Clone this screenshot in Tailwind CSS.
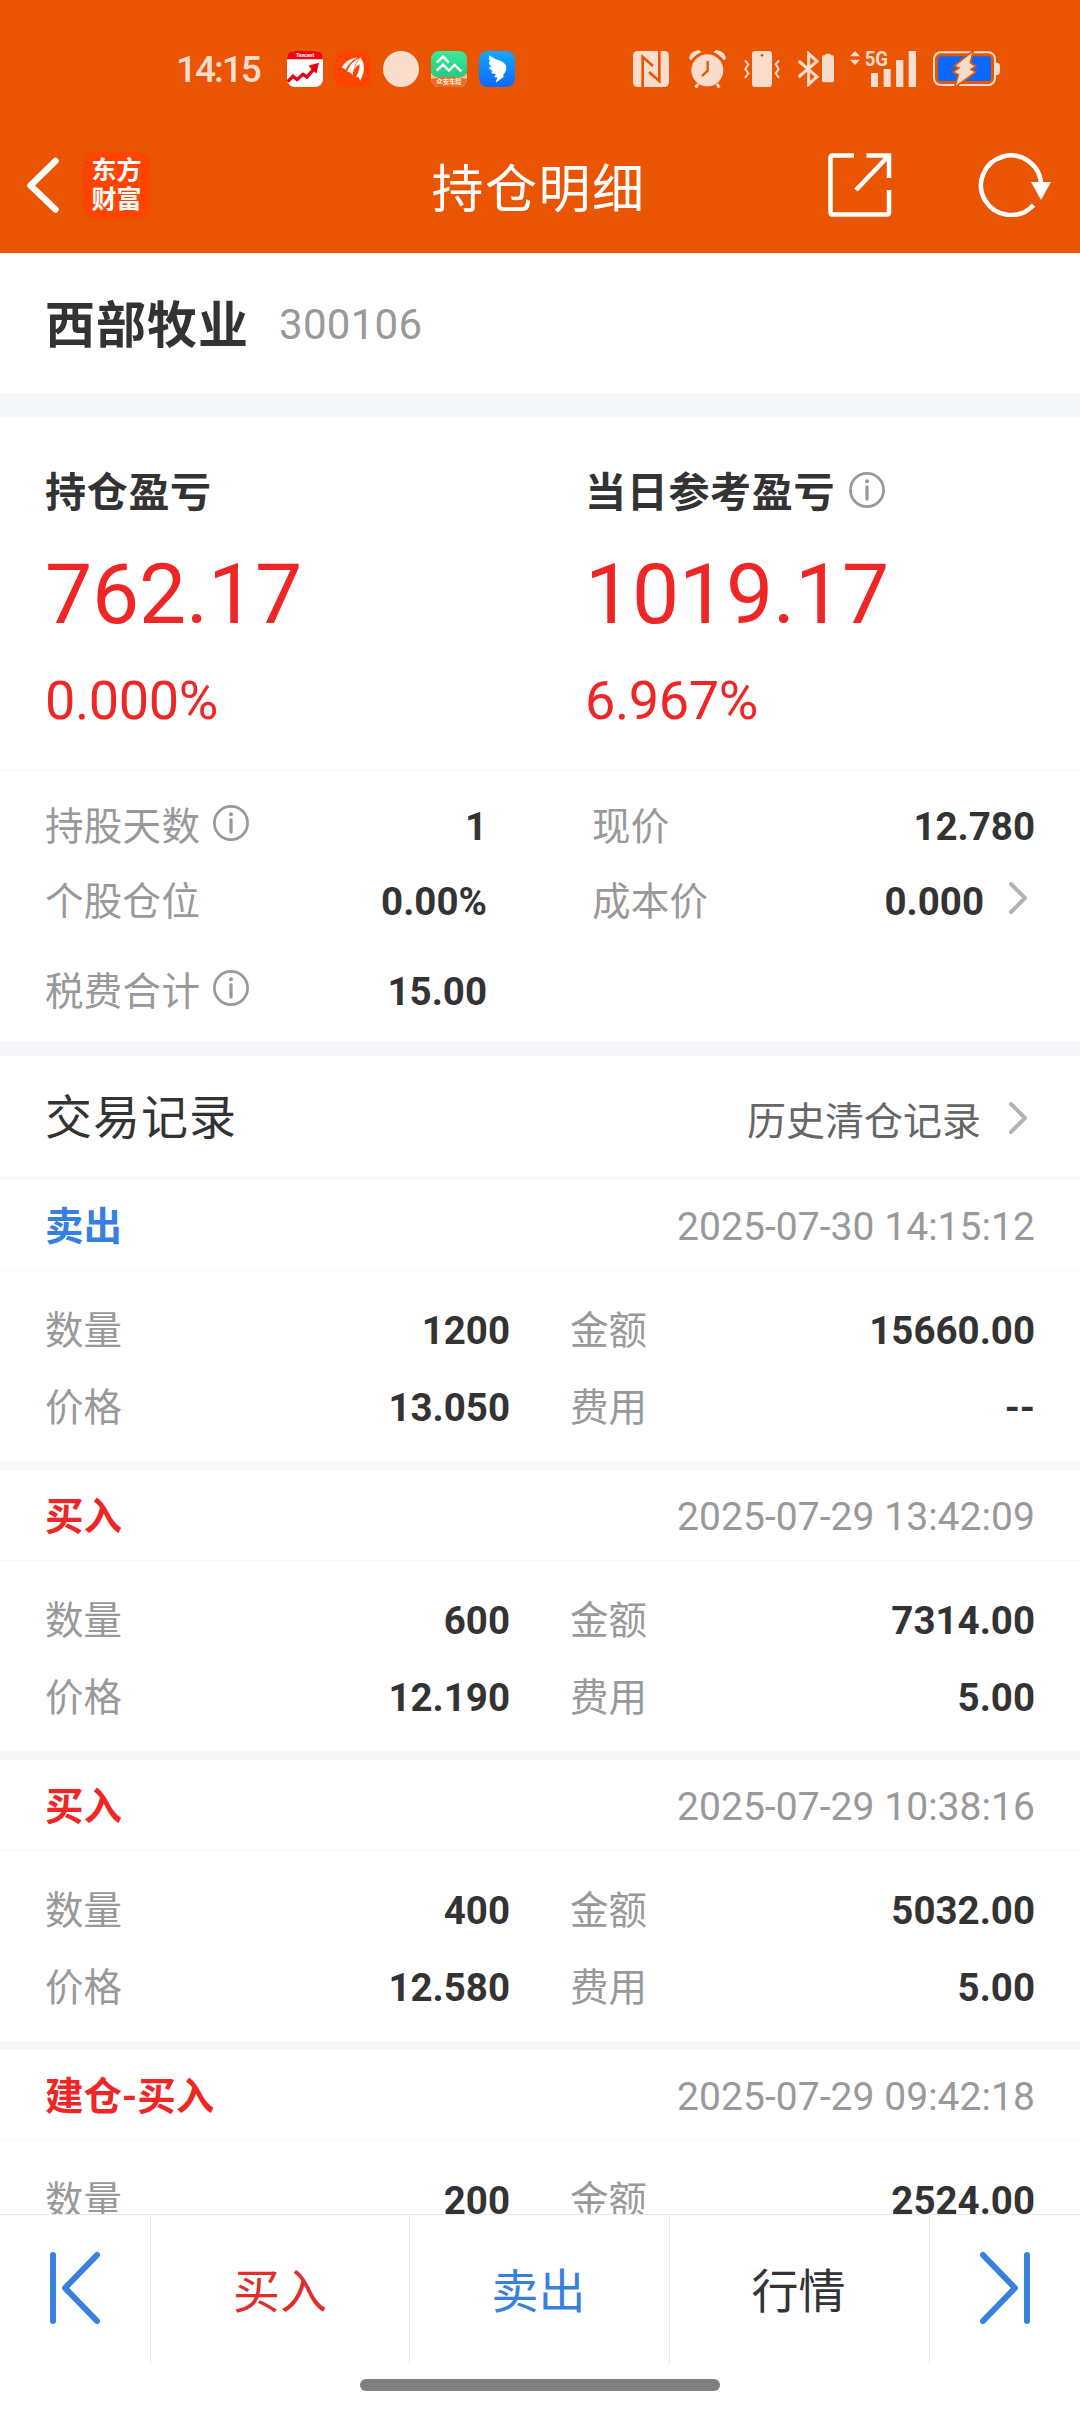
<!DOCTYPE html>
<html lang="zh-CN">
<head>
    <meta charset="UTF-8">
    <meta name="viewport" content="width=device-width, initial-scale=1.0">
    <title>持仓明细</title>
    <script src="https://cdn.jsdelivr.net/npm/@tailwindcss/browser@4"></script>
</head>
<body class="w-[1080px] h-[2412px] flex flex-col overflow-hidden bg-white text-[#333333] font-[Roboto,'Noto_Sans_CJK_SC',sans-serif]">
    <header class="h-[253px] shrink-0 bg-[#ea5504] text-white">
        <!-- Status bar -->
        <div class="h-[138px] pl-[176px] pr-20 flex items-center justify-between text-[#fbddce]">
            <div class="flex items-center gap-3">
                <span class="w-[99px] text-[37px] leading-none font-medium tracking-[-2px]">14:15</span>
                <svg class="size-9" viewBox="0 0 108 108">
                    <rect width="108" height="108" rx="24" fill="#fff"/>
                    <path d="M0 25V22Q0 0 24 0H84Q108 0 108 22V25Z" fill="#ec0a12"/>
                    <text x="54" y="18" text-anchor="middle" font-family="Roboto" font-weight="700" font-size="15" fill="#fff">Tencent</text>
                    <path d="M2 92L18 76L30 86L48 70L60 78L82 52" fill="none" stroke="#e60012" stroke-width="10"/>
                    <path d="M96 35L64 44L88 68Z" fill="#e60012"/>
                </svg>
                <svg class="size-9" viewBox="0 0 108 108">
                    <rect width="108" height="108" rx="24" fill="#ff4400"/>
                    <path d="M20 50Q34 24 68 19Q42 34 31 57Q28 50 20 50ZM36 62Q46 34 72 21Q56 44 53 73Q47 62 36 62ZM57 56Q64 34 76 19Q98 50 75 90Q74 76 63 77Q74 60 74 40Q64 44 57 56Z" fill="#fff"/>
                </svg>
                <div class="size-9 rounded-full bg-[#fbddce]"></div>
                <svg class="size-9" viewBox="0 0 108 108">
                    <defs>
                        <linearGradient id="green" x1="0" y1="0" x2="0" y2="1"><stop stop-color="#3deb98"/><stop offset="1" stop-color="#1fb97a"/></linearGradient>
                        <clipPath id="appClip"><rect width="108" height="108" rx="24"/></clipPath>
                    </defs>
                    <g clip-path="url(#appClip)">
                        <rect width="108" height="108" fill="url(#green)"/>
                        <path d="M0 66Q8 78 24 80H84Q100 78 108 66V108H0Z" fill="#f7c877"/>
                        <path d="M0 84Q54 72 108 84V108H0Z" fill="#f0692a"/>
                        <path d="M17 35L36 17L54 35M17 59L36 41L54 59L71 42L91 61" fill="none" stroke="#fff" stroke-width="7"/>
                        <text x="54" y="100" text-anchor="middle" font-family="Noto Sans CJK SC" font-weight="700" font-size="19" fill="#fff3d0">众安车险</text>
                    </g>
                </svg>
                <svg class="size-9" viewBox="0 0 108 108">
                    <defs><linearGradient id="blue" x1="0" y1="0" x2="0" y2="1"><stop stop-color="#12a8ff"/><stop offset="1" stop-color="#0a68ff"/></linearGradient></defs>
                    <rect width="108" height="108" rx="26" fill="url(#blue)"/>
                    <path d="M30 13Q44 24 66 30Q83 38 82 52Q81 62 71 76L77 76L50 95L55 79H45L51 69Q40 70 35 62L44 61Q31 57 30 48L39 49Q29 40 29 32L34 34Q28 24 30 13Z" fill="#fff"/>
                </svg>
            </div>
            <div class="flex items-center">
                <!-- NFC -->
                <svg class="size-9" viewBox="0 0 108 108">
                    <rect width="108" height="108" rx="14" fill="#fbddce"/>
                    <path d="M29 108V18L60 45M79 0V90L48 63" fill="none" stroke="#ea5504" stroke-width="8"/>
                </svg>
                <!-- Alarm -->
                <svg class="w-[37px] h-[38px] ml-5" viewBox="0 0 111 114">
                    <circle cx="55" cy="61" r="48" fill="#fbddce"/>
                    <path d="M0 26Q2 4 30 0L38 7Q18 14 7 31ZM111 26Q109 4 81 0L73 7Q93 14 104 31Z" fill="#fbddce"/>
                    <path d="M27 102L20 113M84 102L91 113" stroke="#fbddce" stroke-width="9"/>
                    <path d="M56 36V62L41 76" fill="none" stroke="#ea5504" stroke-width="7" stroke-linecap="round"/>
                </svg>
                <!-- Vibrate -->
                <svg class="size-9 ml-[18px]" viewBox="0 0 108 108">
                    <rect x="24" width="60" height="108" rx="10" fill="#fbddce"/>
                    <circle cx="54" cy="13" r="4" fill="#ea5504"/>
                    <path d="M3 28L13 40L4 54L13 67L3 81M105 28L95 40L104 54L95 67L105 81" fill="none" stroke="#fbddce" stroke-width="6"/>
                </svg>
                <!-- Bluetooth -->
                <svg class="size-9 ml-[18px]" viewBox="0 0 108 108">
                    <path d="M2 30L57 77L32 100V8L57 31L2 78" fill="none" stroke="#fbddce" stroke-width="9"/>
                    <path d="M72 18Q72 13 77 13H82V8H98V13H103Q108 13 108 18V89Q108 94 103 94H77Q72 94 72 89Z" fill="#fbddce"/>
                </svg>
                <!-- 5G signal -->
                <svg class="w-[66px] h-9 ml-4" viewBox="0 0 198 108">
                    <path d="M15 0L30 16H0ZM15 42L30 26H0Z" fill="#fbddce"/>
                    <text x="44" y="44" font-family="Roboto" font-weight="700" font-size="58" textLength="70" lengthAdjust="spacingAndGlyphs" fill="#fbddce">5G</text>
                    <path d="M63 66H84V108H63ZM101 54H122V108H101ZM138 27H160V108H138ZM176 0H198V108H176Z" fill="#fbddce"/>
                </svg>
                <!-- Battery -->
                <svg class="w-[67px] h-[38px] ml-[17px]" viewBox="0 0 201 114">
                    <rect x="3" y="7" width="183" height="98" rx="20" fill="none" stroke="#fbddce" stroke-width="6"/>
                    <path d="M189 38H194Q201 40 201 48V66Q201 73 194 75H189Z" fill="#fbddce"/>
                    <rect x="15" y="19" width="159" height="74" rx="10" fill="#0a68ff"/>
                    <path d="M122 0L64 48L78 54L60 66L76 74L64 114L128 66L114 58L128 48L112 38Z" fill="#fbddce" stroke="#ea5504" stroke-width="5"/>
                </svg>
            </div>
        </div>

        <!-- Title bar -->
        <div class="h-[94px] pl-6 pr-[29px] grid grid-cols-[1fr_auto_1fr] items-center">
            <div class="flex items-center">
                <svg class="w-9 h-[60px]" viewBox="0 0 36 60" fill="none" stroke="#fff" stroke-width="6.500" stroke-linecap="round" stroke-linejoin="round">
                    <path d="M31.500 6L6.500 30.500L31.500 54.500"/>
                </svg>
                <div class="ml-[23px] size-[67px] rounded-[14px] bg-[#ff4400] flex flex-col items-center justify-center text-[25px] leading-[29px] font-bold">
                    <span>东方</span>
                    <span>财富</span>
                </div>
            </div>
            <h1 class="text-[52px] leading-[60px] tracking-[1.5px] pt-[11px] pl-[2px]">持仓明细</h1>
            <div class="flex items-center justify-end gap-[85px]">
                <svg class="w-16 h-16" viewBox="0 0 64 64" fill="none" stroke="#fff" stroke-width="4.5">
                    <path d="M26 2.500H4.500Q2.500 2.500 2.500 4.500V59.500Q2.500 61.500 4.500 61.500H59Q61 61.500 61 59.500V37M38.500 2.500H61V25M60 3.500L28 37"/>
                </svg>
                <svg class="w-[74px] h-16" viewBox="0 0 74 64">
                    <path d="M64 32A30 29.800 0 1 0 56.500 52" fill="none" stroke="#fff" stroke-width="4.500"/>
                    <path d="M54 29H74L64 47Z" fill="#fff"/>
                </svg>
            </div>
        </div>
    </header>

    <main class="flex-1 min-h-0 overflow-hidden">
        <!-- Stock -->
        <section class="h-[140px] pl-[45px] pt-[6px] flex items-center">
            <h2 class="text-[50px] leading-none font-bold tracking-[1px]">西部牧业</h2>
            <span class="ml-[30px] -mt-[2px] text-[42px] leading-none text-[#999999] tracking-[0.3px]">300106</span>
        </section>

        <!-- Profit and loss -->
        <section class="h-[378px] border-t-24 border-b border-[#f6f7fa] pl-[45px] pt-[52px] grid grid-cols-[540px_1fr]">
            <div>
                <h3 class="h-[50px] flex items-center text-[41px] font-bold tracking-[0.7px]">持仓盈亏</h3>
                <p class="mt-[26px] h-[100px] text-[84px] leading-[100px] tracking-[-0.2px] text-[#ef2626]">762.17</p>
                <p class="mt-[26px] h-[60px] text-[54px] leading-[60px] tracking-[-0.4px] text-[#ef2626]">0.000%</p>
            </div>
            <div>
                <h3 class="h-[50px] flex items-center text-[41px] font-bold tracking-[0.7px]">当日参考盈亏
                    <svg class="size-9 ml-[14px] -mt-2" viewBox="0 0 36 36" fill="none" stroke="#999" stroke-width="2.700"><circle cx="18" cy="18" r="16.600"/><path d="M18 15V27" stroke-width="3.300" stroke-linecap="round"/><circle cx="18" cy="9.300" r="2" fill="#999" stroke="none"/></svg>
                </h3>
                <p class="mt-[26px] h-[100px] text-[84px] leading-[100px] tracking-[-0.2px] text-[#ef2626]">1019.17</p>
                <p class="mt-[26px] h-[60px] text-[54px] leading-[60px] tracking-[-0.4px] text-[#ef2626]">6.967%</p>
            </div>
        </section>

        <!-- Position details -->
        <section class="h-[270px] pl-[45px] pr-[45px] pt-[18px] grid grid-cols-[442px_1fr] grid-rows-[75px_75px_105px] gap-x-[105px] text-[38.5px]">
            <div class="flex items-center justify-between">
                <span class="flex items-center text-[#999999] tracking-[0.3px]">持股天数
                    <svg class="size-9 ml-[13px] -mt-2" viewBox="0 0 36 36" fill="none" stroke="#999" stroke-width="2.700"><circle cx="18" cy="18" r="16.600"/><path d="M18 15V27" stroke-width="3.300" stroke-linecap="round"/><circle cx="18" cy="9.300" r="2" fill="#999" stroke="none"/></svg>
                </span>
                <span class="font-bold">1</span>
            </div>
            <div class="flex items-center justify-between">
                <span class="text-[#999999] tracking-[0.3px]">现价</span>
                <span class="font-bold">12.780</span>
            </div>
            <div class="flex items-center justify-between">
                <span class="text-[#999999] tracking-[0.3px]">个股仓位</span>
                <span class="font-bold">0.00%</span>
            </div>
            <div class="flex items-center justify-between">
                <span class="text-[#999999] tracking-[0.3px]">成本价</span>
                <span class="flex items-center font-bold">0.000
                    <svg class="w-5 h-9 ml-6 mr-[7px] -mt-2" viewBox="0 0 20 36" fill="none" stroke="#b3b3b3" stroke-width="4" stroke-linecap="round" stroke-linejoin="round"><path d="M3 4L17 18L3 32"/></svg>
                </span>
            </div>
            <div class="flex items-center justify-between">
                <span class="flex items-center text-[#999999] tracking-[0.3px]">税费合计
                    <svg class="size-9 ml-[13px] -mt-2" viewBox="0 0 36 36" fill="none" stroke="#999" stroke-width="2.700"><circle cx="18" cy="18" r="16.600"/><path d="M18 15V27" stroke-width="3.300" stroke-linecap="round"/><circle cx="18" cy="9.300" r="2" fill="#999" stroke="none"/></svg>
                </span>
                <span class="font-bold">15.00</span>
            </div>
        </section>

        <!-- Trade records -->
        <section class="h-[139px] border-t-15 border-b-4 border-[#f6f7fa] pl-[45px] pr-11 pt-[3px] flex items-center justify-between">
            <h2 class="text-[47px] leading-none tracking-[1px]">交易记录</h2>
            <a class="flex items-center pt-[9px] text-[39px] leading-none text-[#666666]">历史清仓记录
                <svg class="w-5 h-9 ml-[27px] mr-2 -mt-2" viewBox="0 0 20 36" fill="none" stroke="#b3b3b3" stroke-width="4" stroke-linecap="round" stroke-linejoin="round"><path d="M3 4L17 18L3 32"/></svg>
            </a>
        </section>
        <div id="records"></div>
    </main>

    <!-- Bottom actions -->
    <nav class="h-[198px] shrink-0 border-t border-[#e8e8e8] bg-white">
        <div class="h-[149px] grid grid-cols-[151px_259px_260px_260px_1fr] text-[47px] text-center leading-none">
            <button class="border-r border-[#ebebeb] pl-12 pb-1 flex items-center">
                <svg class="w-14 h-[76px]" viewBox="0 0 56 76" fill="none" stroke="#3880e0" stroke-width="6" stroke-linecap="round" stroke-linejoin="round"><path d="M5 5V71M49 5L17 38L49 71"/></svg>
            </button>
            <button class="border-r border-[#ebebeb] pt-1 text-[#e02c2c]">买入</button>
            <button class="border-r border-[#ebebeb] pt-1 pr-[2px] text-[#3880e0]">卖出</button>
            <button class="border-r border-[#ebebeb] pt-1 pr-[2px]">行情</button>
            <button class="pr-12 pb-1 flex items-center justify-end">
                <svg class="w-14 h-[76px]" viewBox="0 0 56 76" fill="none" stroke="#3880e0" stroke-width="6" stroke-linecap="round" stroke-linejoin="round"><path d="M51 5V71M7 5L39 38L7 71"/></svg>
            </button>
        </div>
        <div class="mx-auto mt-[15px] w-[360px] h-3 rounded-full bg-[#808080]"></div>
    </nav>

    <script>
        const records = [
            { type: '卖出', color: 'text-[#3880e0]', time: '2025-07-30 14:15:12', count: '1200', amount: '15660.00', price: '13.050', fee: '--' },
            { type: '买入', color: 'text-[#ef2626]', time: '2025-07-29 13:42:09', count: '600', amount: '7314.00', price: '12.190', fee: '5.00' },
            { type: '买入', color: 'text-[#ef2626]', time: '2025-07-29 10:38:16', count: '400', amount: '5032.00', price: '12.580', fee: '5.00' },
            { type: '建仓-买入', color: 'text-[#ef2626]', time: '2025-07-29 09:42:18', count: '200', amount: '2524.00' }
        ];

        function cell(label, value) {
            if (!value) return '';
            return `
                <div class="flex items-center justify-between">
                    <span class="text-[#999999]">${label}</span>
                    <span class="font-bold">${value}</span>
                </div>
            `;
        }

        document.getElementById('records').innerHTML = records.map(r => `
            <article class="h-[290px] border-b-9 border-[#f6f7fa] text-[38.5px]">
                <div class="h-[91px] border-b border-[#f6f7fa] pl-[45px] pr-[45px] pt-1 flex items-center justify-between">
                    <span class="font-bold ${r.color}">${r.type}</span>
                    <span class="text-[39px] text-[#999999] tracking-[0.05px]">${r.time}</span>
                </div>
                <div class="pl-[45px] pr-[45px] pt-[21px] grid grid-cols-[465px_1fr] grid-rows-[77px_77px] gap-x-[60px]">
                    ${cell('数量', r.count)}
                    ${cell('金额', r.amount)}
                    ${cell('价格', r.price)}
                    ${cell('费用', r.fee)}
                </div>
            </article>
        `).join('');
    </script>
</body>
</html>
